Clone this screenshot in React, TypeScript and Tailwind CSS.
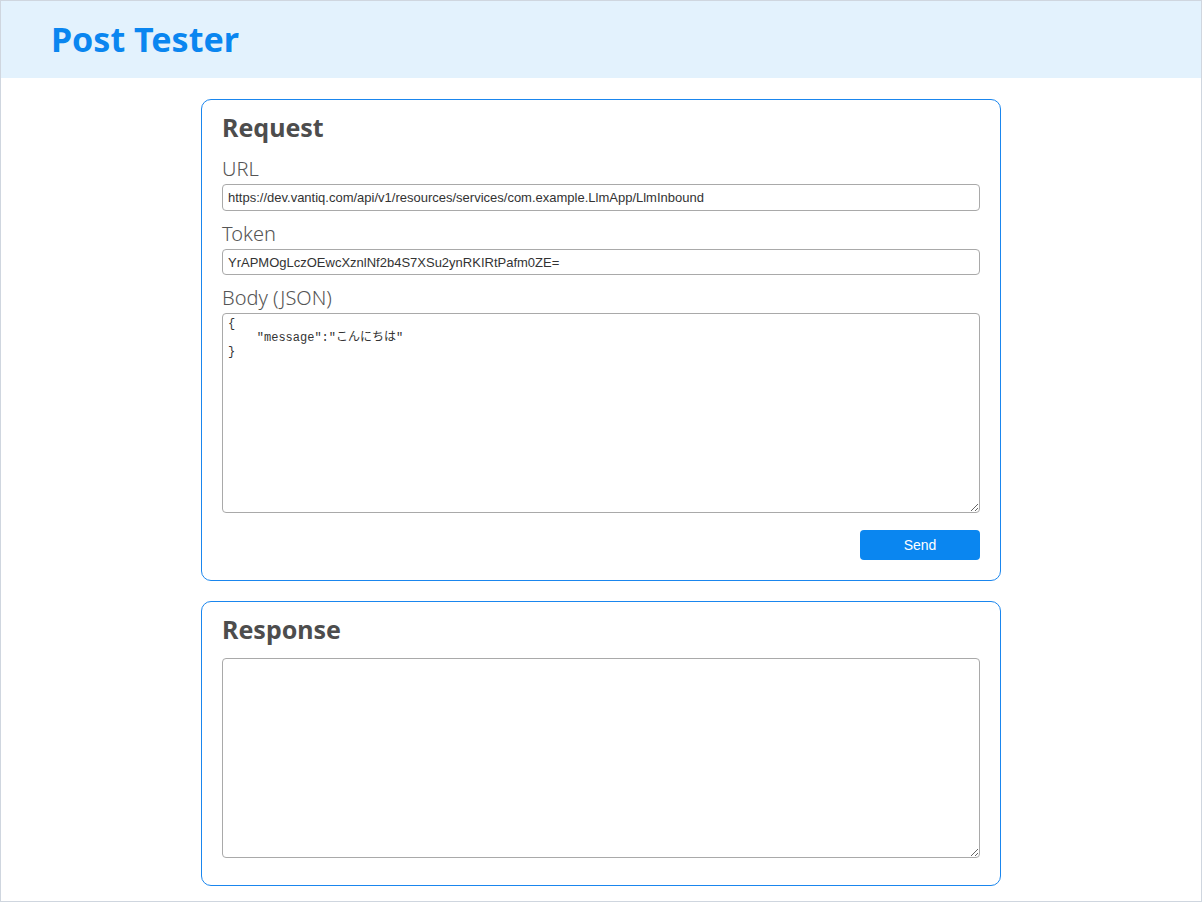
import { useState } from 'react'

const labelCls = 'block text-[20px] leading-[24px] text-[#555] font-light mb-[3px]'
const inputCls =
  'block w-full h-[26px] px-[5px] text-[13px] text-[#333] border border-[#a9a9a9] rounded-[4px] bg-white outline-none font-["Liberation_Sans",Arial,sans-serif]'
const areaCls =
  'block w-full h-[200px] px-[5px] py-[3px] text-[12px] leading-[14px] text-[#333] border border-[#a9a9a9] rounded-[4px] bg-white outline-none resize-y font-["Liberation_Mono","Noto_Sans_CJK_JP",monospace]'

export default function App() {
  const [url, setUrl] = useState('https://dev.vantiq.com/api/v1/resources/services/com.example.LlmApp/LlmInbound')
  const [token, setToken] = useState('YrAPMOgLczOEwcXznlNf2b4S7XSu2ynRKIRtPafm0ZE=')
  const [body, setBody] = useState('{\n    "message":"こんにちは"\n}')
  const [response, setResponse] = useState('')

  return (
    <div className='h-[902px] border border-[#cfd6df] bg-white font-["Noto_Sans","Noto_Sans_CJK_JP",sans-serif]'>
      {/* Header */}
      <header className="h-[77px] bg-[#e3f2fd] pl-[50px] flex items-center">
        <h1 className="text-[34px] font-bold text-[#0a86f0] leading-none -mt-[2px]">Post Tester</h1>
      </header>

      <main className="flex flex-col gap-[20px] pt-[21px]">
        {/* Request */}
        <section className="mx-auto w-[800px] border border-[#1a86ee] rounded-[10px] px-[20px] pt-[12px] pb-[20px]">
          <h2 className="text-[25px] leading-[30px] font-bold text-[#4d4d4d] mb-[15px]">Request</h2>

          <label className={labelCls}>URL</label>
          <input className={`${inputCls} h-[27px]`} value={url} onChange={e => setUrl(e.target.value)} />

          <label className={`${labelCls} mt-[11px]`}>Token</label>
          <input className={inputCls} value={token} onChange={e => setToken(e.target.value)} />

          <label className={`${labelCls} mt-[11px]`}>Body (JSON)</label>
          <textarea className={areaCls} value={body} onChange={e => setBody(e.target.value)} />

          <div className="flex justify-end mt-[17px]">
            <button
              onClick={() => setResponse('')}
              className='w-[120px] h-[30px] rounded-[4px] bg-[#0a86f0] text-white text-[14px] font-["Liberation_Sans",Arial,sans-serif]'
            >
              Send
            </button>
          </div>
        </section>

        {/* Response */}
        <section className="mx-auto w-[800px] border border-[#1a86ee] rounded-[10px] px-[20px] pt-[12px] pb-[27px]">
          <h2 className="text-[25px] leading-[30px] font-bold text-[#4d4d4d] mb-[14px]">Response</h2>
          <textarea className={areaCls} value={response} readOnly />
        </section>
      </main>
    </div>
  )
}
